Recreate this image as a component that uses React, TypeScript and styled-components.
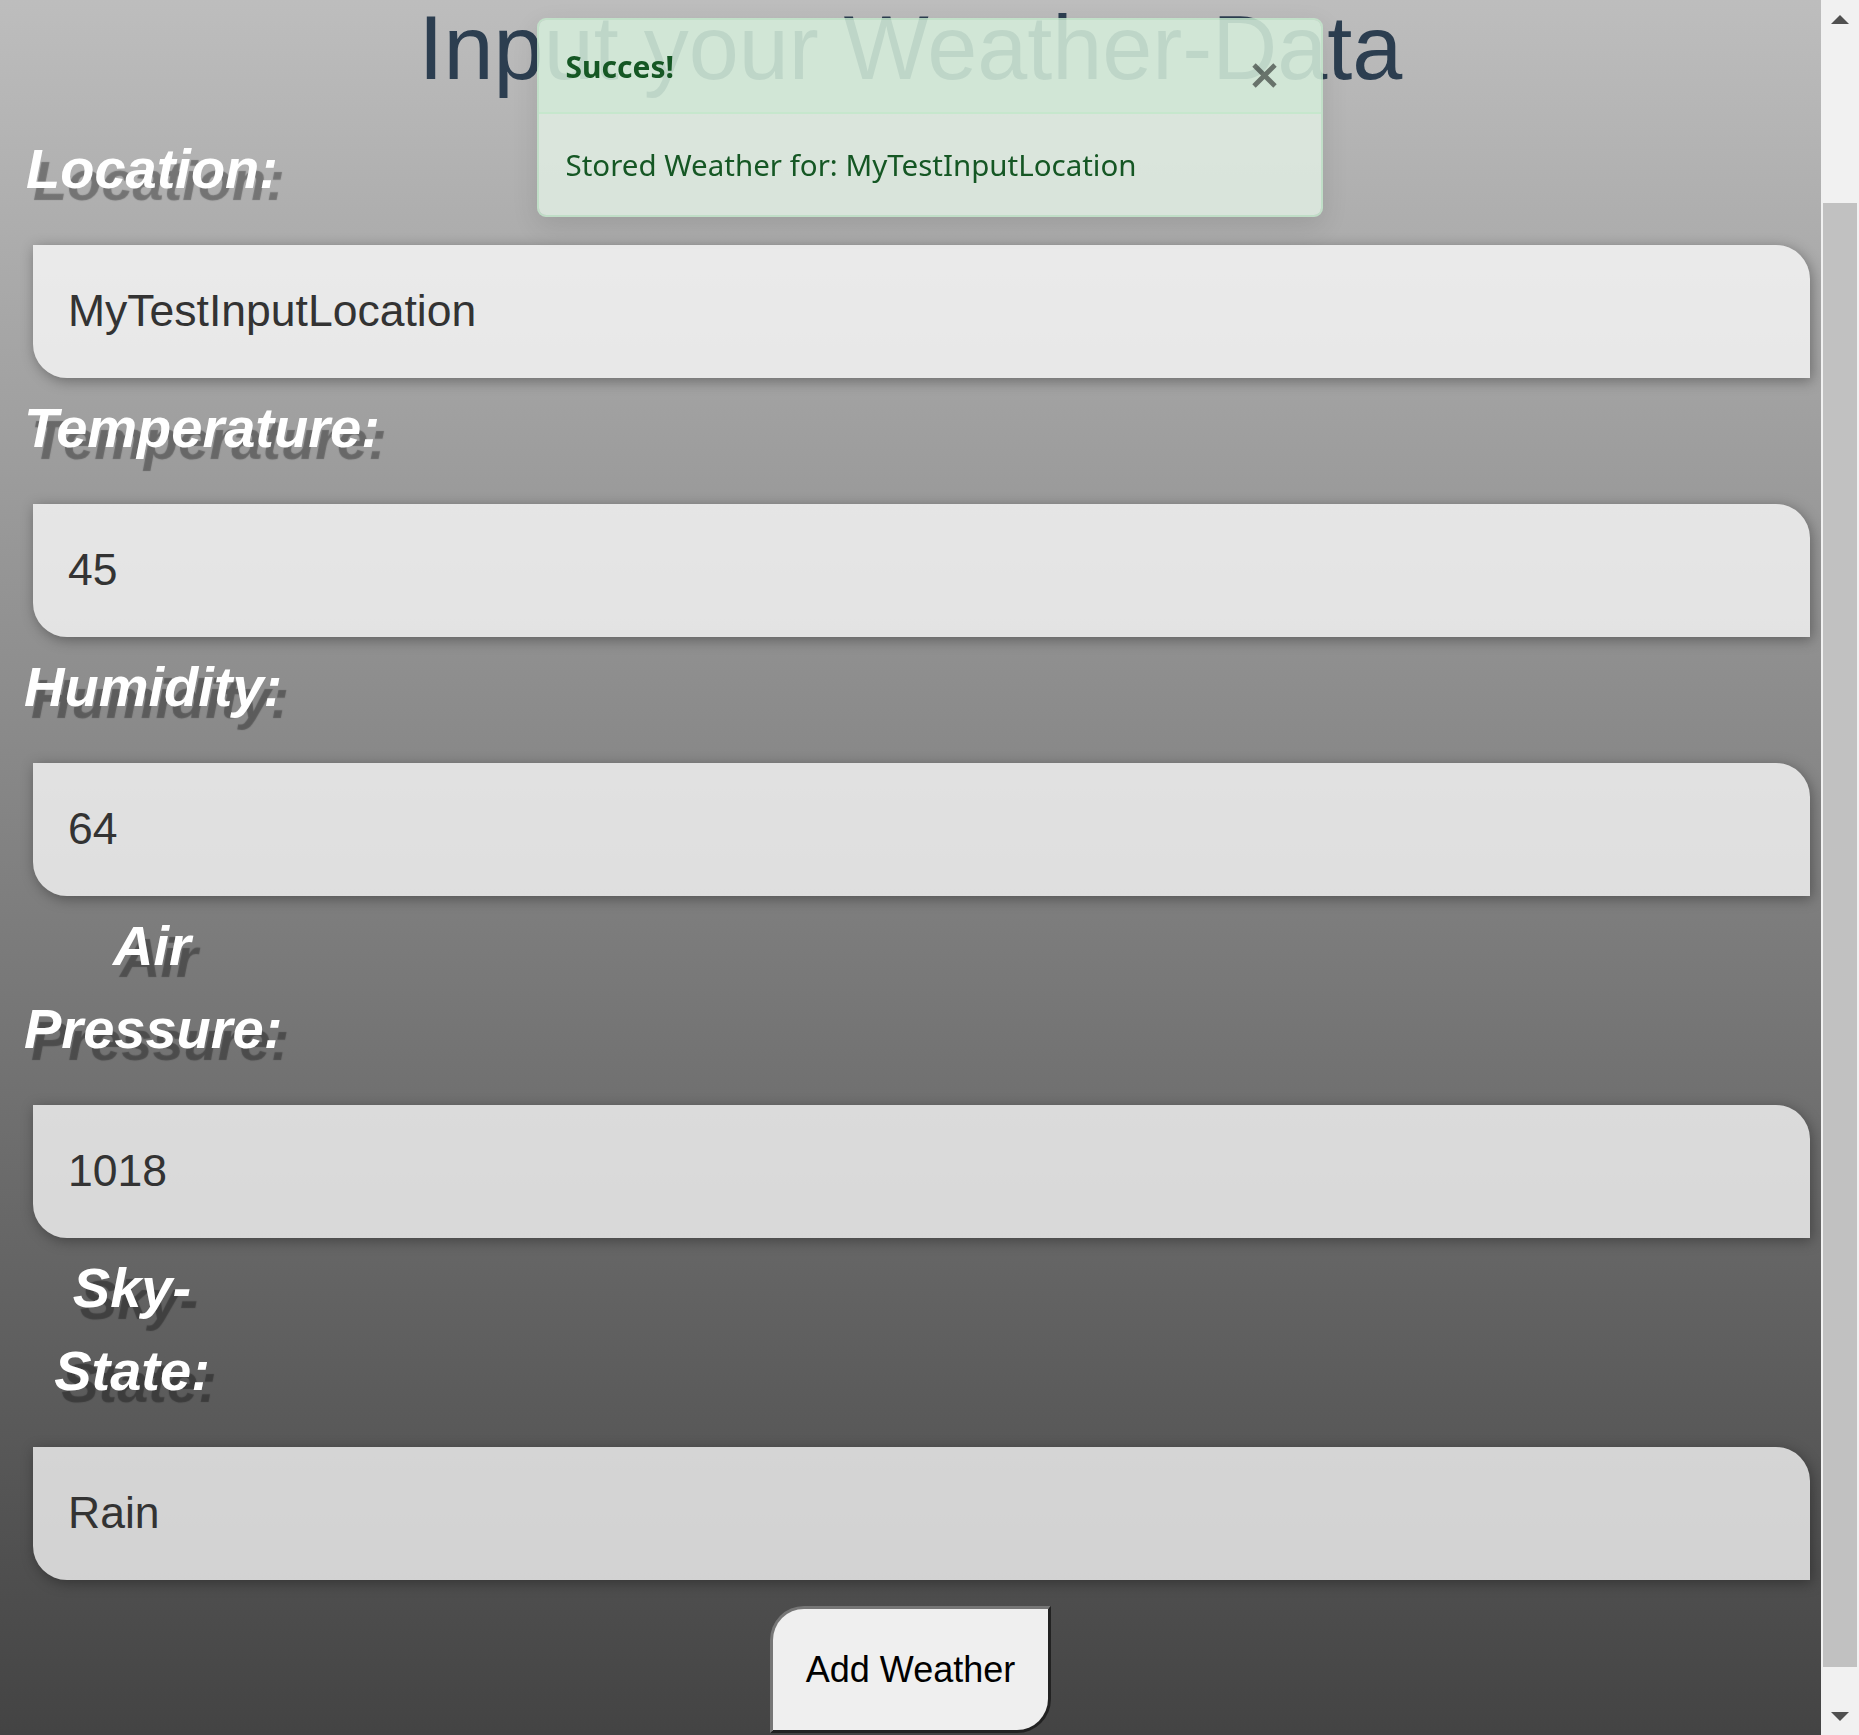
import { FC, useLayoutEffect, useRef, useState } from 'react';
import styled, { createGlobalStyle } from 'styled-components';

interface IField {
  label: string;
  value: string;
  width?: number;
}

interface IThumb {
  top: number;
  height: number;
}

const fields: IField[] = [
  { label: 'Location:', value: 'MyTestInputLocation' },
  { label: 'Temperature:', value: '45' },
  { label: 'Humidity:', value: '64' },
  { label: 'Air Pressure:', value: '1018' },
  { label: 'Sky-State:', value: 'Rain', width: 216 },
];

const ARROW_SIZE = 38;

const App: FC = () => {
  const scrollRef = useRef<HTMLDivElement>(null);
  const [thumb, setThumb] = useState<IThumb>({ top: 0, height: 0 });

  const updateThumb = () => {
    const el = scrollRef.current;
    if (!el) return;
    const track = el.clientHeight - ARROW_SIZE * 2;
    setThumb({
      top: (track * el.scrollTop) / el.scrollHeight,
      height: (track * el.clientHeight) / el.scrollHeight,
    });
  };

  // the page is shown scrolled a bit down, like in the screenshot
  useLayoutEffect(() => {
    if (scrollRef.current) scrollRef.current.scrollTop = 195;
    updateThumb();
  }, []);

  return (
    <>
      <GlobalStyle />
      <StyledShell>
        <StyledViewport ref={scrollRef} onScroll={updateThumb}>
          <StyledPage>
            <StyledTitle>Input your Weather-Data</StyledTitle>
            <StyledForm onSubmit={(e) => e.preventDefault()}>
              {fields.map((field) => (
                <StyledField key={field.label}>
                  <StyledLabel $width={field.width ?? 256}>{field.label}</StyledLabel>
                  <StyledInput type="text" defaultValue={field.value} />
                </StyledField>
              ))}
              <StyledAddButton type="submit">Add Weather</StyledAddButton>
            </StyledForm>
          </StyledPage>
        </StyledViewport>

        <StyledScrollRail aria-hidden>
          <StyledScrollArrow>
            <StyledTriangle $up />
          </StyledScrollArrow>
          <StyledScrollTrack>
            <StyledScrollThumb style={{ marginTop: thumb.top, height: thumb.height }} />
          </StyledScrollTrack>
          <StyledScrollArrow>
            <StyledTriangle />
          </StyledScrollArrow>
        </StyledScrollRail>
      </StyledShell>

      <StyledToaster>
        <StyledToast role="alert">
          <StyledToastHeader>
            <strong>Succes!</strong>
            <StyledCloseButton aria-label="Close">
              <svg width="25" height="25" viewBox="0 0 25 25">
                <path d="M2 2 L23 23 M23 2 L2 23" stroke="currentColor" strokeWidth="4.8" />
              </svg>
            </StyledCloseButton>
          </StyledToastHeader>
          <StyledToastBody>Stored Weather for: MyTestInputLocation</StyledToastBody>
        </StyledToast>
      </StyledToaster>
    </>
  );
};

const GlobalStyle = createGlobalStyle`
  html, body, #root {
    margin: 0;
    height: 100%;
  }
  body {
    overflow: hidden;
    font-family: 'Liberation Sans', Arial, sans-serif;
  }
`;

const StyledShell = styled.div`
  display: flex;
  height: 100vh;
`;

const StyledViewport = styled.div`
  flex: 1;
  min-width: 0;
  overflow-y: scroll;
  scrollbar-width: none;
`;

const StyledScrollRail = styled.div`
  display: flex;
  flex-direction: column;
  width: ${ARROW_SIZE}px;
  background: #f1f1f1;
`;

const StyledScrollArrow = styled.div`
  display: flex;
  align-items: center;
  justify-content: center;
  height: ${ARROW_SIZE}px;
`;

const StyledTriangle = styled.span<{ $up?: boolean }>`
  width: 0;
  height: 0;
  border-left: 9px solid transparent;
  border-right: 9px solid transparent;
  ${({ $up }) =>
    $up ? 'border-bottom: 9px solid #505050;' : 'border-top: 9px solid #505050;'}
`;

const StyledScrollTrack = styled.div`
  flex: 1;
  display: flex;
  flex-direction: column;
`;

const StyledScrollThumb = styled.div`
  margin: 0 2px;
  background: #c1c1c1;
`;

const StyledPage = styled.div`
  padding: 192px 0 37px;
  background: linear-gradient(to bottom, #cbcbcb, #414141);
`;

const StyledTitle = styled.h1`
  margin: 0 0 18px;
  font-size: 90px;
  font-weight: 400;
  line-height: 1.15;
  text-align: center;
  color: #2c3e50;
`;

const StyledForm = styled.form`
  display: flex;
  flex-direction: column;
`;

const StyledField = styled.div`
  display: flex;
  flex-direction: column;
`;

const StyledLabel = styled.label<{ $width: number }>`
  display: block;
  width: ${({ $width }) => $width}px;
  margin: 8px 0 35px 24px;
  font-size: 56px;
  font-style: italic;
  font-weight: 700;
  line-height: 83px;
  text-align: center;
  color: #fff;
  text-shadow: 7px 12px 1px rgba(0, 0, 0, 0.34);
`;

const StyledInput = styled.input`
  box-sizing: border-box;
  height: 133px;
  margin: 0 11px 0 33px;
  padding: 0 35px;
  border: none;
  border-radius: 0 34px;
  outline: none;
  background: rgba(255, 255, 255, 0.75);
  box-shadow: 2px 3px 14px rgba(0, 0, 0, 0.35);
  font-family: 'Liberation Sans', Arial, sans-serif;
  font-size: 44.5px;
  color: #333;
`;

const StyledAddButton = styled.button`
  align-self: center;
  margin-top: 26px;
  padding: 40px 33px;
  border: 3px solid;
  border-color: #767676 #222 #222 #767676;
  border-radius: 34px 0;
  background: #efefef;
  font-family: 'Liberation Sans', Arial, sans-serif;
  font-size: 36px;
  line-height: 41px;
  color: #000;
  cursor: pointer;
`;

const StyledToaster = styled.div`
  position: fixed;
  top: 18px;
  left: 0;
  right: 0;
  width: 786px;
  margin: 0 auto;
  z-index: 10;
`;

const StyledToast = styled.div`
  box-sizing: border-box;
  overflow: hidden;
  border: 2px solid rgba(195, 230, 203, 0.85);
  border-radius: 9px;
  box-shadow: 0 9px 27px rgba(0, 0, 0, 0.1);
  font-family: 'Noto Sans', 'Open Sans', sans-serif;
  color: #155724;
`;

const StyledToastHeader = styled.div`
  box-sizing: border-box;
  display: flex;
  align-items: center;
  height: 94px;
  padding: 0 27px;
  background: rgba(212, 237, 218, 0.87);
  border-bottom: 2px solid rgba(195, 230, 203, 0.85);

  strong {
    font-size: 30px;
    font-weight: 700;
  }
`;

const StyledCloseButton = styled.button`
  display: flex;
  margin: 18px 17px 0 auto;
  padding: 0;
  border: none;
  background: none;
  color: rgba(0, 0, 0, 0.5);
  cursor: pointer;
`;

const StyledToastBody = styled.div`
  padding: 27px;
  background: rgba(230, 245, 233, 0.76);
  font-size: 29.5px;
  line-height: 47px;
`;

export default App;
